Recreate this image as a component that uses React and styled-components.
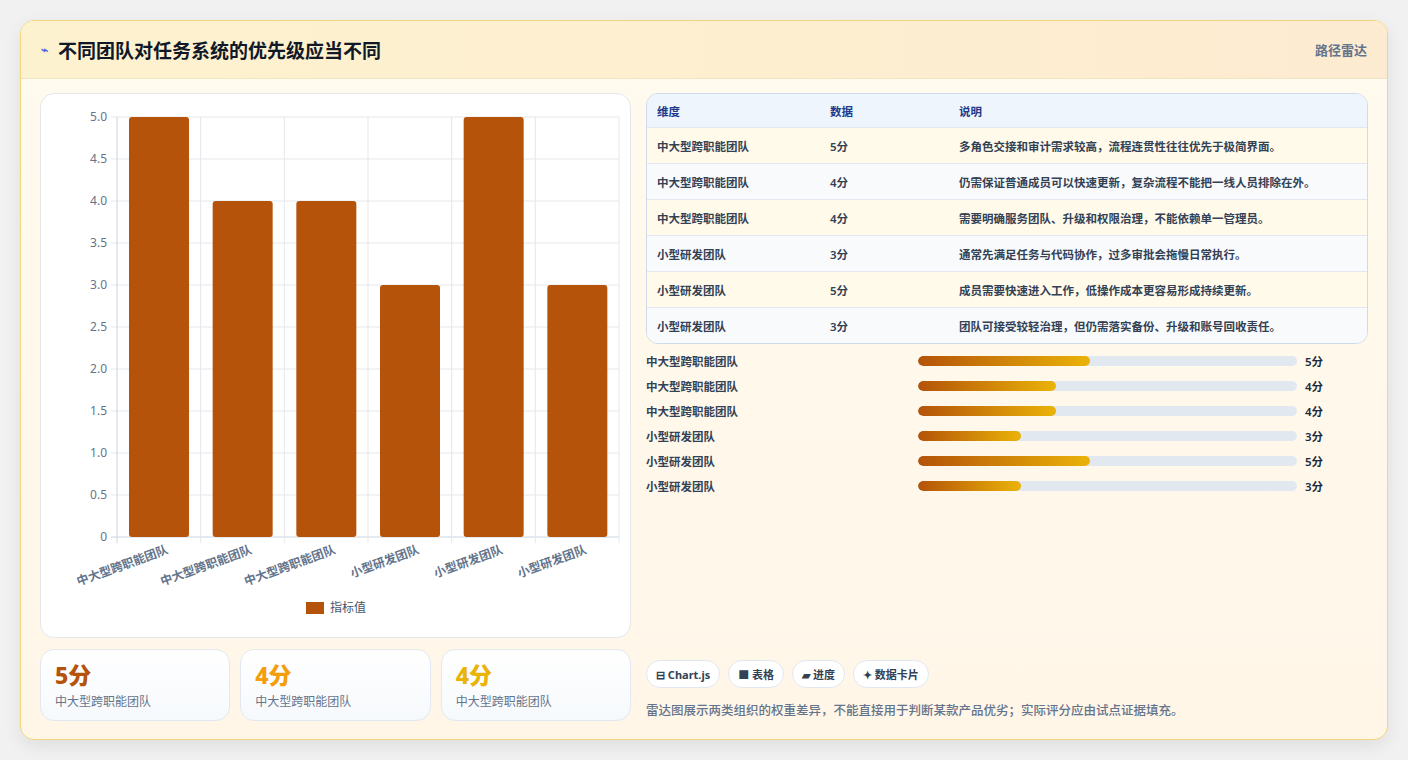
import React from "react";
import styled, { createGlobalStyle } from "styled-components";

const G = createGlobalStyle`
  body{margin:0;background:#f1f1f1;font-family:"Noto Sans","Noto Sans CJK SC",sans-serif;}
`;
const Page = styled.div`padding:20px;`;
const Card = styled.div`
  border:1px solid #f3d57c;border-radius:14px;overflow:hidden;height:718px;
  background:linear-gradient(180deg,#fffbee,#fff6e8);box-shadow:0 6px 18px rgba(0,0,0,.08);
  display:flex;flex-direction:column;
`;
const Header = styled.div`
  height:57px;display:flex;align-items:center;justify-content:space-between;padding:0 20px;
  background:linear-gradient(90deg,#fdf2cf,#fdebd1);border-bottom:1px solid #f1e4c2;
`;
const Title = styled.h1`margin:0;font-size:19px;font-weight:700;color:#111827;display:flex;align-items:center;gap:10px;`;
const Route = styled.span`font-size:13px;color:#64748b;font-weight:600;`;
const Body = styled.div`flex:1;display:grid;grid-template-columns:591px 1fr;gap:15px;padding:14px 19px 18px 19px;`;
const Col = styled.div`display:flex;flex-direction:column;gap:11px;`;
const ChartBox = styled.div`height:543px;background:#fff;border:1px solid #e5e7eb;border-radius:14px;position:relative;`;
const Stats = styled.div`display:grid;grid-template-columns:repeat(3,1fr);gap:10px;`;
const Stat = styled.div`height:72px;box-sizing:border-box;border:1px solid #e2e8f0;border-radius:14px;background:linear-gradient(180deg,#fff,#f6f9fc);padding:10px 14px;`;
const StatV = styled.div`font-size:23px;font-weight:800;color:${p=>p.c};line-height:30px;`;
const StatL = styled.div`font-size:12px;color:#64748b;margin-top:2px;`;
const Table = styled.div`border:1px solid #cfdbe8;border-radius:12px;overflow:hidden;`;
const Row = styled.div`display:grid;grid-template-columns:173px 129px 1fr;height:35px;align-items:center;padding-left:10px;
  font-size:11.5px;font-weight:600;color:${p=>p.h?"#1e3a8a":"#334155"};
  background:${p=>p.h?"#eef5fd":p.alt?"#f8fafc":"#fffaea"};border-top:${p=>p.h?"none":"1px solid #e2e8f0"};
  ${p=>p.h&&"height:33px;"}`;
const Bars = styled.div`display:flex;flex-direction:column;gap:7px;margin-top:8px;`;
const BarRow = styled.div`display:grid;grid-template-columns:272px 379px 1fr;gap:0;align-items:center;height:18px;font-size:11.5px;font-weight:600;color:#334155;`;
const Track = styled.div`height:10px;border-radius:5px;background:#e2e8f0;overflow:hidden;margin-right:8px;width:379px;`;
const Fill = styled.div`height:100%;border-radius:5px;background:linear-gradient(90deg,#b45309,#eab308);`;
const Spacer = styled.div`flex:1;`;
const Tags = styled.div`display:flex;gap:8px;`;
const Tag = styled.span`height:28px;box-sizing:border-box;padding:0 9px;border:1px solid #e2e8f0;border-radius:14px;background:#fff;font-size:11px;font-weight:700;color:#334155;display:flex;align-items:center;gap:4px;`;
const Note = styled.div`font-size:12.5px;color:#64748b;font-weight:500;margin-top:12px;margin-bottom:2px;`;

const vals=[5,4,4,3,5,3];
const labels=["中大型跨职能团队","中大型跨职能团队","中大型跨职能团队","小型研发团队","小型研发团队","小型研发团队"];
const notes=["多角色交接和审计需求较高，流程连贯性往往优先于极简界面。","仍需保证普通成员可以快速更新，复杂流程不能把一线人员排除在外。","需要明确服务团队、升级和权限治理，不能依赖单一管理员。","通常先满足任务与代码协作，过多审批会拖慢日常执行。","成员需要快速进入工作，低操作成本更容易形成持续更新。","团队可接受较轻治理，但仍需落实备份、升级和账号回收责任。"];

function Chart(){
  const x0=76,x1=578,y0=443,step=84,cw=(x1-x0)/6;
  return <svg width="589" height="541" style={{position:"absolute",left:0,top:0}} fontFamily="Noto Sans, Noto Sans CJK SC, sans-serif">
    {[0,1,2,3,4,5,6,7,8,9,10].map(i=>{const y=y0-i*42;return <g key={i}>
      <line x1={x0-6} x2={x1} y1={y} y2={y} stroke={i===0?"#cbd5e1":"#e5e7eb"}/>
      <text x={x0-10} y={y+4} fontSize="12" fill="#64748b" textAnchor="end">{i===0?"0":(i/2).toFixed(1)}</text></g>})}
    {[0,1,2,3,4,5,6].map(i=><line key={i} x1={x0+i*cw} x2={x0+i*cw} y1={y0-420} y2={y0+6} stroke={i===0?"#cbd5e1":"#e5e7eb"}/>)}
    {vals.map((v,i)=><rect key={i} x={x0+i*cw+12} y={y0-v*step} width={60} height={v*step} rx="3" fill="#b5530b"/>)}
    {labels.map((l,i)=><text key={i} transform={`translate(${x0+i*cw+cw/2+10},${y0+16}) rotate(-20)`} textAnchor="end" fontSize="12" fontWeight="700" fill="#64748b">{l}</text>)}
    <rect x="265" y="508" width="18" height="12" fill="#b5530b"/>
    <text x="289" y="518" fontSize="12" fill="#475569">指标值</text>
  </svg>;
}

export default function App(){
  return <Page><G/><Card>
    <Header><Title><span style={{color:"#4f6bd8",fontSize:12}}>⌁</span>不同团队对任务系统的优先级应当不同</Title><Route>路径雷达</Route></Header>
    <Body>
      <Col>
        <ChartBox><Chart/></ChartBox>
        <Stats>
          <Stat><StatV c="#b45309">5分</StatV><StatL>中大型跨职能团队</StatL></Stat>
          <Stat><StatV c="#f59e0b">4分</StatV><StatL>中大型跨职能团队</StatL></Stat>
          <Stat><StatV c="#eab308">4分</StatV><StatL>中大型跨职能团队</StatL></Stat>
        </Stats>
      </Col>
      <Col style={{gap:0}}>
        <Table>
          <Row h><span>维度</span><span>数据</span><span>说明</span></Row>
          {vals.map((v,i)=><Row key={i} alt={i%2===1}><span>{labels[i]}</span><span>{v}分</span><span>{notes[i]}</span></Row>)}
        </Table>
        <Bars>
          {vals.map((v,i)=><BarRow key={i}><span>{labels[i]}</span><Track><Fill style={{width:`${v/11*100}%`}}/></Track><span style={{paddingLeft:8,color:"#1e293b"}}>{v}分</span></BarRow>)}
        </Bars>
        <Spacer/>
        <Tags>
          <Tag>⊟ Chart.js</Tag><Tag>■ 表格</Tag><Tag>▰ 进度</Tag><Tag>✦ 数据卡片</Tag>
        </Tags>
        <Note>雷达图展示两类组织的权重差异，不能直接用于判断某款产品优劣；实际评分应由试点证据填充。</Note>
      </Col>
    </Body>
  </Card></Page>;
}
